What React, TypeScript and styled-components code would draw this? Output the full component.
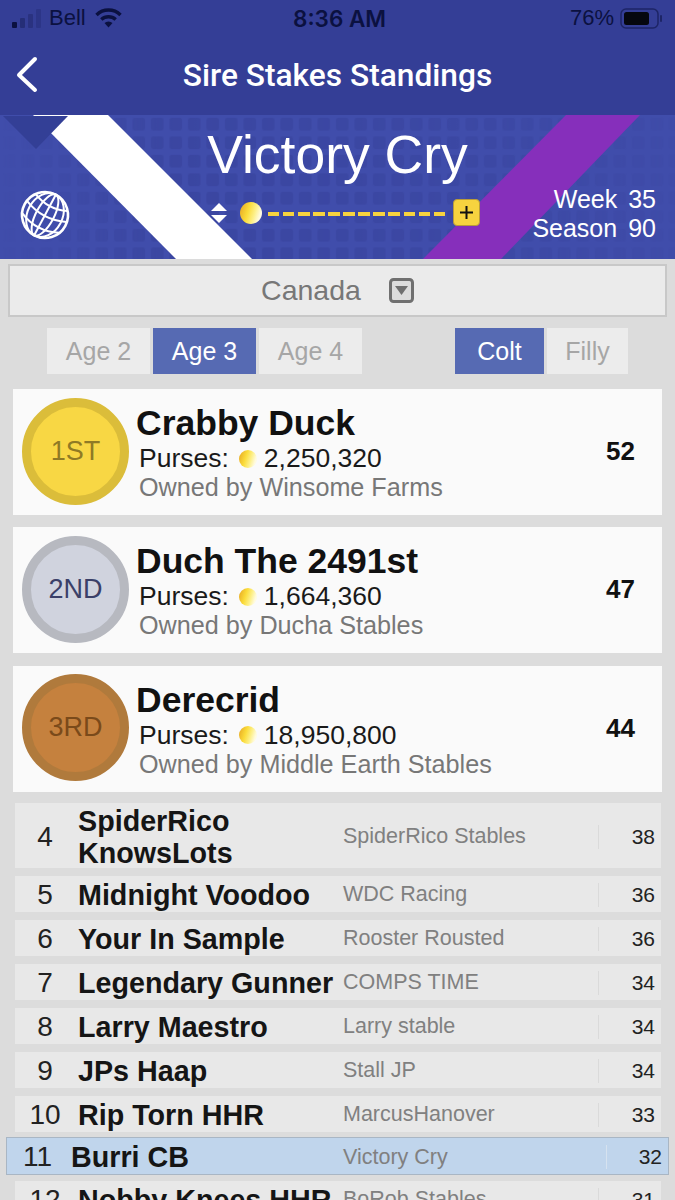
import React from 'react';
import styled, { createGlobalStyle } from 'styled-components';

const FONT = '"Liberation Sans", Arial, sans-serif';

const GlobalStyle = createGlobalStyle`
  html, body {
    margin: 0;
    padding: 0;
    background: #dcdcdc;
    overflow: hidden;
  }
  * { box-sizing: border-box; }
`;

const Screen = styled.div`
  width: 675px;
  height: 1200px;
  overflow: hidden;
  background: #dcdcdc;
  font-family: ${FONT};
`;

const TopBar = styled.header`
  height: 115px;
  background: #343e96;
  display: flex;
  flex-direction: column;
`;

const StatusBar = styled.div`
  height: 36px;
  position: relative;
  display: flex;
  align-items: center;
  justify-content: space-between;
  padding: 0 11px 0 12px;
  color: #0b1140;
  font-size: 22px;
`;

const StatusGroup = styled.div`
  display: flex;
  align-items: center;
  gap: 6px;
`;

const WifiIcon = styled.svg`
  margin-left: 3px;
`;

const Clock = styled.span`
  position: absolute;
  left: 293px;
  top: 6px;
  font: 600 22.5px/25px Inter, ${FONT};
`;

const NavRow = styled.div`
  flex: 1;
  position: relative;
  display: flex;
  align-items: center;
  justify-content: center;
`;

const NavTitle = styled.h1`
  margin: 0;
  color: #fff;
  font: 500 31.7px/1 Roboto, ${FONT};
`;

const BackButton = styled.svg`
  position: absolute;
  left: 14px;
  top: 20px;
`;

const Banner = styled.section`
  height: 144px;
  position: relative;
  overflow: hidden;
  background: #404dab;
  color: #fff;
`;

const BannerArt = styled.svg`
  position: absolute;
  inset: 0;
`;

const BannerTitle = styled.h2`
  position: absolute;
  left: 0;
  right: 0;
  top: 7px;
  margin: 0;
  text-align: center;
  font: 400 53.5px/66px ${FONT};
`;

const Stepper = styled.div`
  position: absolute;
  left: 209px;
  top: 84px;
  display: flex;
  align-items: center;
`;

const StepperArrows = styled.svg`
  margin-right: 11px;
`;

const Dashes = styled.div`
  width: 178px;
  height: 4px;
  margin: 2px 7px 0 6px;
  background: repeating-linear-gradient(90deg, #f7d33f 0 11.4px, transparent 11.4px 15.06px);
`;

const PlusButton = styled.div`
  width: 27px;
  height: 27px;
  border-radius: 4px;
  background: #f7d33f;
  border: 1px solid #b99b3a;
  display: flex;
  align-items: center;
  justify-content: center;
`;

const SeasonInfo = styled.div`
  position: absolute;
  right: 19px;
  top: 70px;
  display: grid;
  grid-template-columns: auto auto;
  justify-items: end;
  column-gap: 11px;
  font-size: 25px;
  line-height: 29px;
`;

const CountrySelect = styled.div`
  height: 53px;
  margin: 5px 8px 0;
  background: #ebebeb;
  border: 2px solid #c8c8c8;
  display: flex;
  align-items: center;
  justify-content: center;
  gap: 28px;
  color: #777;
  font-size: 28.5px;
`;

const TabsRow = styled.div`
  display: flex;
  margin: 11px 0 0 47px;
`;

const TabGroup = styled.div<{ $offset?: number }>`
  display: flex;
  gap: 3px;
  margin-left: ${(p) => p.$offset ?? 0}px;
`;

const Tab = styled.div<{ $width: number; $active?: boolean }>`
  width: ${(p) => p.$width}px;
  height: 46px;
  display: flex;
  align-items: center;
  justify-content: center;
  font-size: 25px;
  background: ${(p) => (p.$active ? '#566ab3' : '#ececec')};
  color: ${(p) => (p.$active ? '#fff' : '#a6a6a6')};
`;

const Podium = styled.div`
  display: flex;
  flex-direction: column;
  gap: 12.3px;
  margin: 15px 13px 0;
`;

const PodiumCard = styled.article`
  height: 126px;
  background: #fafafa;
  display: flex;
  align-items: center;
  padding: 0 0 2px 9px;
  position: relative;
`;

const MEDALS = {
  gold: { ring: '#dbbd3a', fill: '#f8d744', text: '#8f7a25' },
  silver: { ring: '#b7b9c0', fill: '#d0d3de', text: '#3b4068' },
  bronze: { ring: '#b07a3c', fill: '#c5813e', text: '#7a4a1a' },
};

const Medal = styled.div<{ $kind: keyof typeof MEDALS }>`
  width: 107px;
  height: 107px;
  flex: none;
  border-radius: 50%;
  border: 9px solid ${(p) => MEDALS[p.$kind].ring};
  background: ${(p) => MEDALS[p.$kind].fill};
  color: ${(p) => MEDALS[p.$kind].text};
  display: flex;
  align-items: center;
  justify-content: center;
  font-size: 27px;
`;

const PodiumInfo = styled.div`
  margin-left: 7px;
  padding-top: 3px;
  display: flex;
  flex-direction: column;
`;

const PodiumName = styled.div`
  margin-bottom: 2px;
  font-size: 35.5px;
  line-height: 38px;
  font-weight: 700;
  color: #111;
`;

const Purses = styled.div`
  display: flex;
  align-items: center;
  margin-left: 3px;
  height: 29px;
  font-size: 26.5px;
  color: #1a1a1a;
`;

const PurseCoin = styled.span`
  display: inline-flex;
  margin: 0 7px 0 10px;
`;

const OwnedBy = styled.div`
  margin-left: 3px;
  font-size: 25.2px;
  line-height: 28px;
  color: #777;
`;

const PodiumPoints = styled.div`
  position: absolute;
  right: 27px;
  top: 47px;
  font-size: 26px;
  font-weight: 700;
  color: #111;
`;

const Standings = styled.div`
  margin-top: 11.4px;
  display: flex;
  flex-direction: column;
`;

const Row = styled.div<{ $mine?: boolean; $tall?: boolean }>`
  display: grid;
  align-items: center;
  grid-template-columns: ${(p) => (p.$mine ? '56px 280px 263px 1fr' : '55px 273px 255px 1fr')};
  height: ${(p) => (p.$mine ? 38 : p.$tall ? 65 : 36)}px;
  margin: ${(p) => (p.$mine ? '-3px 6px 6px' : '0 14px 8px 15px')};
  padding-top: ${(p) => (p.$mine ? 3 : 2)}px;
  background: ${(p) => (p.$mine ? '#c0d5ec' : '#e8e8e8')};
  border: ${(p) => (p.$mine ? '1px solid #a9b6c4' : 'none')};
`;

const Rank = styled.div`
  text-align: center;
  padding-left: 5px;
  font-size: 28px;
  color: #222;
`;

const HorseName = styled.div`
  padding-left: 8px;
  font-size: 28.7px;
  line-height: 32px;
  font-weight: 700;
  color: #151515;
  white-space: normal;
`;

const Stable = styled.div`
  font-size: 21.5px;
  color: #808080;
  white-space: nowrap;
`;

const Points = styled.div<{ $mine?: boolean }>`
  height: 24px;
  border-left: 1px solid ${(p) => (p.$mine ? '#d6e2ef' : '#dadada')};
  display: flex;
  align-items: center;
  justify-content: flex-end;
  padding-right: 6px;
  font-size: 21px;
  color: #222;
`;

const Coin: React.FC<{ size: number; id: string }> = ({ size, id }) => (
  <svg width={size} height={size} viewBox="0 0 20 20">
    <defs>
      <linearGradient id={id} x1="0" y1="0" x2="1" y2="0.3">
        <stop offset="0" stopColor="#e5a422" />
        <stop offset="0.45" stopColor="#fbdc3a" />
        <stop offset="0.75" stopColor="#fdf08a" />
        <stop offset="1" stopColor="#fffbe0" />
      </linearGradient>
    </defs>
    <circle cx="10" cy="10" r="10" fill={`url(#${id})`} />
  </svg>
);

const PODIUM = [
  { kind: 'gold', place: '1ST', name: 'Crabby Duck', purses: '2,250,320', owner: 'Winsome Farms', points: 52 },
  { kind: 'silver', place: '2ND', name: 'Duch The 2491st', purses: '1,664,360', owner: 'Ducha Stables', points: 47 },
  { kind: 'bronze', place: '3RD', name: 'Derecrid', purses: '18,950,800', owner: 'Middle Earth Stables', points: 44 },
] as const;

const ROWS = [
  { rank: 4, name: 'SpiderRico KnowsLots', stable: 'SpiderRico Stables', points: 38, tall: true },
  { rank: 5, name: 'Midnight Voodoo', stable: 'WDC Racing', points: 36 },
  { rank: 6, name: 'Your In Sample', stable: 'Rooster Rousted', points: 36 },
  { rank: 7, name: 'Legendary Gunner', stable: 'COMPS TIME', points: 34 },
  { rank: 8, name: 'Larry Maestro', stable: 'Larry stable', points: 34 },
  { rank: 9, name: 'JPs Haap', stable: 'Stall JP', points: 34 },
  { rank: 10, name: 'Rip Torn HHR', stable: 'MarcusHanover', points: 33 },
  { rank: 11, name: 'Burri CB', stable: 'Victory Cry', points: 32, mine: true },
  { rank: 12, name: 'Nobby Knees HHR', stable: 'BoRob Stables', points: 31 },
];

const App: React.FC = () => (
  <Screen>
    <GlobalStyle />
    <TopBar>
      <StatusBar>
        <StatusGroup>
          <svg width="31" height="20" viewBox="0 0 31 20">
            <rect x="0" y="14" width="5" height="6" rx="1" fill="#0b1140" />
            <rect x="8" y="10" width="5" height="10" rx="1" fill="#0b1140" opacity="0.35" />
            <rect x="16" y="6" width="5" height="14" rx="1" fill="#0b1140" opacity="0.25" />
            <rect x="24" y="1" width="5" height="19" rx="1" fill="#0b1140" opacity="0.18" />
          </svg>
          <span>Bell</span>
          <WifiIcon width="27" height="20" viewBox="0 0 27 20">
            <path d="M1.5 7 A17 17 0 0 1 25.5 7" fill="none" stroke="#0b1140" strokeWidth="3.4" />
            <path d="M6.3 11.6 A10.5 10.5 0 0 1 20.7 11.6" fill="none" stroke="#0b1140" strokeWidth="3.4" />
            <path d="M9.5 15 L13.5 19.5 L17.5 15 A6 6 0 0 0 9.5 15 Z" fill="#0b1140" />
          </WifiIcon>
        </StatusGroup>
        <Clock>8:36 AM</Clock>
        <StatusGroup>
          <span>76%</span>
          <svg width="44" height="21" viewBox="0 0 44 21">
            <rect x="1" y="1" width="37" height="19" rx="5" fill="none" stroke="#0b1140" strokeOpacity="0.55" strokeWidth="1.5" />
            <rect x="4" y="4" width="25" height="13" rx="2.5" fill="#05070f" />
            <rect x="40" y="7" width="2" height="7" rx="1" fill="#0b1140" opacity="0.55" />
          </svg>
        </StatusGroup>
      </StatusBar>
      <NavRow>
        <BackButton width="26" height="38" viewBox="0 0 26 38">
          <path d="M21 3 L5 19 L21 34" fill="none" stroke="#fff" strokeWidth="4" strokeLinecap="round" strokeLinejoin="round" />
        </BackButton>
        <NavTitle>Sire Stakes Standings</NavTitle>
      </NavRow>
    </TopBar>

    <Banner>
      <BannerArt width="675" height="144" viewBox="0 0 675 144">
        <defs>
          <pattern id="grid" x="0" y="0" width="18.5" height="18.5" patternUnits="userSpaceOnUse">
            <rect x="3" y="3" width="12.5" height="12.5" rx="2" fill="#37429b" />
          </pattern>
          <linearGradient id="fade" x1="0" y1="0" x2="1" y2="0">
            <stop offset="0" stopColor="#fff" stopOpacity="0" />
            <stop offset="0.25" stopColor="#fff" stopOpacity="0.6" />
            <stop offset="0.7" stopColor="#fff" stopOpacity="0.45" />
            <stop offset="1" stopColor="#fff" stopOpacity="0.1" />
          </linearGradient>
          <mask id="fadeMask">
            <rect width="675" height="144" fill="url(#fade)" />
          </mask>
        </defs>
        <rect width="675" height="144" fill="url(#grid)" mask="url(#fadeMask)" />
        <polygon points="33,0 108,0 252,144 176,144" fill="#fff" />
        <polygon points="566,0 640,0 501,144 423,144" fill="#862fbb" />
        <polygon points="3,1 68,1 36,34" fill="#333f96" />
        <g fill="none" stroke="#fff" strokeWidth="2" transform="translate(45 100) rotate(28)">
          <circle r="23" strokeWidth="2.6" />
          <ellipse rx="9" ry="23" />
          <ellipse rx="17.5" ry="23" />
          <path d="M0 -23 V23" />
          <path d="M-18 -14 Q0 -6 18 -14" />
          <path d="M-22.5 -4 Q0 6 22.5 -4" />
          <path d="M-21 9 Q0 19 21 9" />
        </g>
      </BannerArt>
      <BannerTitle>Victory Cry</BannerTitle>
      <Stepper>
        <StepperArrows width="20" height="24" viewBox="0 0 20 24">
          <polygon points="10,2 18,10 2,10" fill="#fff" />
          <polygon points="10,22 18,14 2,14" fill="#fff" />
        </StepperArrows>
        <Coin size={22} id="coinBanner" />
        <Dashes />
        <PlusButton>
          <svg width="15" height="15" viewBox="0 0 15 15">
            <path d="M7.5 1 V14 M1 7.5 H14" stroke="#111" strokeWidth="2" />
          </svg>
        </PlusButton>
      </Stepper>
      <SeasonInfo>
        <span>Week</span>
        <span>35</span>
        <span>Season</span>
        <span>90</span>
      </SeasonInfo>
    </Banner>

    <CountrySelect>
      <span>Canada</span>
      <svg width="25" height="25" viewBox="0 0 25 25">
        <rect x="1.5" y="1.5" width="22" height="22" rx="3" fill="#ddd" stroke="#707070" strokeWidth="3" />
        <polygon points="6,8 19,8 12.5,17" fill="#707070" />
      </svg>
    </CountrySelect>

    <TabsRow>
      <TabGroup>
        <Tab $width={103}>Age 2</Tab>
        <Tab $width={103} $active>Age 3</Tab>
        <Tab $width={103}>Age 4</Tab>
      </TabGroup>
      <TabGroup $offset={93}>
        <Tab $width={89} $active>Colt</Tab>
        <Tab $width={81}>Filly</Tab>
      </TabGroup>
    </TabsRow>

    <Podium>
      {PODIUM.map((p) => (
        <PodiumCard key={p.place}>
          <Medal $kind={p.kind}>{p.place}</Medal>
          <PodiumInfo>
            <PodiumName>{p.name}</PodiumName>
            <Purses>
              Purses:
              <PurseCoin>
                <Coin size={18} id={`coin${p.points}`} />
              </PurseCoin>
              {p.purses}
            </Purses>
            <OwnedBy>Owned by {p.owner}</OwnedBy>
          </PodiumInfo>
          <PodiumPoints>{p.points}</PodiumPoints>
        </PodiumCard>
      ))}
    </Podium>

    <Standings>
      {ROWS.map((r) => (
        <Row key={r.rank} $mine={r.mine} $tall={r.tall}>
          <Rank>{r.rank}</Rank>
          <HorseName>{r.name}</HorseName>
          <Stable>{r.stable}</Stable>
          <Points $mine={r.mine}>{r.points}</Points>
        </Row>
      ))}
    </Standings>
  </Screen>
);

export default App;
